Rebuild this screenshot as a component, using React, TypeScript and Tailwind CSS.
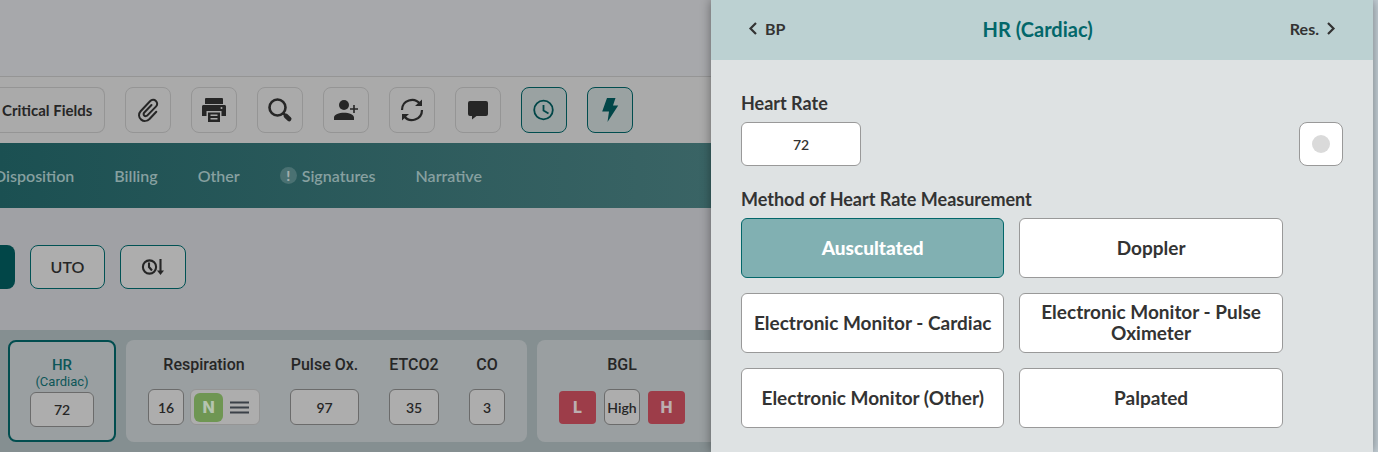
import type { ReactNode } from 'react'

interface Tool {
  name: string
  active?: boolean
  icon: ReactNode
}

const tools: Tool[] = [
  {
    name: 'Attachments',
    icon: (
      <svg viewBox="0 0 26 26" className="size-[26px]" fill="none" stroke="currentColor" strokeWidth="2" strokeLinecap="round">
        <path d="M21.300 14.800l-6.800 7.200c-2.200 2.200-5.800 2.600-8.300.6-2.700-2.200-2.900-6-.6-8.400L15 4.200c1.700-1.700 4.300-1.800 5.900-.3 1.700 1.600 1.700 4 0 5.700l-8.500 8.800c-.9.900-2.300 1-3.200.1-.8-.8-.8-2.100.1-3l7.200-7.500" />
      </svg>
    ),
  },
  {
    name: 'Print',
    icon: (
      <svg viewBox="0 0 26 26" className="size-[26px]" fill="currentColor">
        <path d="M4 2a1 1 0 0 1 1-1h16a1 1 0 0 1 1 1v5H4z" />
        <path d="M1 9.500C1 8.600 1.600 8 2.500 8h21c.9 0 1.500.6 1.500 1.500V19h-4.500v-5h-15v5H1z" />
        <path fillRule="evenodd" d="M7 15.500h12V25H7zM9.500 17.500v1.500h7v-1.500zM9.500 21v1.500h7V21z" />
        <circle cx="20.500" cy="11" r="1" className="fill-[#aaaaaa]" />
      </svg>
    ),
  },
  {
    name: 'Search',
    icon: (
      <svg viewBox="0 0 26 26" className="size-[26px]" fill="none" stroke="currentColor">
        <circle cx="10.500" cy="10.500" r="8" strokeWidth="2.600" />
        <path d="M16 16l2.500 2.500" strokeWidth="2.500" />
        <path d="M19 19l3.200 3" strokeWidth="4.600" strokeLinecap="round" />
      </svg>
    ),
  },
  {
    name: 'Add person',
    icon: (
      <svg viewBox="0 0 26 26" className="size-[26px]" fill="currentColor">
        <circle cx="11" cy="8" r="5" />
        <path d="M1 23v-2.500C1 17.500 6 15.800 11 15.800s10 1.700 10 4.700V23zM20.200 8h1.600v3.200H25v1.600h-3.200V16h-1.600v-3.200H17v-1.600h3.200z" />
      </svg>
    ),
  },
  {
    name: 'Sync',
    icon: (
      <svg viewBox="0 0 26 26" className="size-[26px]" fill="none" stroke="currentColor" strokeWidth="2.200">
        <path d="M3 13A10 10 0 0 1 21 7M23 13A10 10 0 0 1 5 19" />
        <path d="M23 2.500v6.500h-7zM3 23.500V17h7z" fill="currentColor" stroke="none" />
      </svg>
    ),
  },
  {
    name: 'Comments',
    icon: (
      <svg viewBox="0 0 26 26" className="size-[26px]" fill="currentColor">
        <path d="M5 4h16a2 2 0 0 1 2 2v11a2 2 0 0 1-2 2H11.500L7 22.500V19H5a2 2 0 0 1-2-2V6a2 2 0 0 1 2-2z" />
      </svg>
    ),
  },
  {
    name: 'Times',
    active: true,
    icon: (
      <svg viewBox="0 0 26 26" className="size-[26px]" fill="none" stroke="currentColor" strokeWidth="1.800">
        <circle cx="12.500" cy="13" r="9.300" />
        <path d="M12.500 8v5.500l5 3" />
      </svg>
    ),
  },
  {
    name: 'Quick actions',
    active: true,
    icon: (
      <svg viewBox="0 0 26 26" className="size-[26px]" fill="currentColor">
        <path d="M10 1h8.500L16 8.500h5.200L10.500 25 12 14.500H5.200z" />
      </svg>
    ),
  },
]

const methods = [
  'Auscultated',
  'Doppler',
  'Electronic Monitor - Cardiac',
  'Electronic Monitor - Pulse Oximeter',
  'Electronic Monitor (Other)',
  'Palpated',
]

function Vital({ label, value, width }: { label: string; value: string; width: string }) {
  return (
    <label className="flex flex-col items-center gap-3">
      <span className="font-[Roboto,sans-serif] text-base font-medium leading-6">{label}</span>
      <input defaultValue={value} className={`${width} h-9 rounded-md border border-[#6b6b6b] bg-[#adadad] text-center text-sm font-semibold`} />
    </label>
  )
}

function RunReport() {
  return (
    <main className="flex min-w-0 flex-col overflow-hidden whitespace-nowrap bg-[#a0a1a5] text-[#262626]">
      <div className="h-[76px] shrink-0 bg-[#a7a8ab]" />
      <div className="flex gap-5 border-t border-[#959595] bg-[#aaaaaa] py-2.5">
        <button className="h-[46px] w-[105px] shrink-0 rounded-r-lg border border-l-0 border-[#959595] pl-0.5 text-left text-[15px] font-bold">
          Critical Fields
        </button>
        {tools.map((tool) => (
          <button
            key={tool.name}
            aria-label={tool.name}
            className={`flex size-[46px] shrink-0 items-center justify-center rounded-lg border ${
              tool.active ? 'border-[#014d4f] bg-[#9aa2a2] text-[#014648]' : 'border-[#959595]'
            }`}
          >
            {tool.icon}
          </button>
        ))}
      </div>

      <nav className="flex h-[65px] shrink-0 items-center gap-10 bg-linear-to-r from-[#1b5052] to-[#3a6465] text-base font-semibold text-[#87a0a0]">
        <a href="#disposition" className="-ml-1.5">Disposition</a>
        <a href="#billing">Billing</a>
        <a href="#other">Other</a>
        <a href="#signatures" className="flex items-center gap-[5px]">
          <span className="flex size-[17px] items-center justify-center rounded-full bg-[#4a7172] text-sm font-black leading-none text-[#a3adad]">!</span>
          Signatures
        </a>
        <a href="#narrative">Narrative</a>
      </nav>

      <div className="flex gap-[15px] pb-[41px] pt-[37px]">
        <button aria-label="Add vitals" className="h-11 w-[15px] rounded-r-lg bg-[#014648]" />
        <button className="h-11 w-[75px] rounded-lg border border-[#015254] bg-[#adadad] text-base font-semibold">UTO</button>
        <button aria-label="Sort by time" className="flex h-11 w-[66px] items-center justify-center rounded-lg border border-[#015254] bg-[#adadad]">
          <svg viewBox="0 0 24 18" className="h-[18px] w-6" fill="none" stroke="currentColor" strokeWidth="2.100">
            <circle cx="8.500" cy="9" r="6.600" />
            <path d="M8 4.500V9l3 3.500M19.500 1v13" />
            <path d="M16 12.500h7L19.500 17z" fill="currentColor" stroke="none" />
          </svg>
        </button>
      </div>

      <div className="flex grow gap-2.5 bg-[#858f91] py-2.5 pl-2">
        <label className="flex h-[102px] w-[108px] shrink-0 flex-col items-center rounded-lg border-2 border-[#014d4f] bg-[#9a9fa1] pt-3.5 font-[Roboto,sans-serif] text-[#0d5658]">
          <span className="text-[15px] font-medium leading-[18px]">HR</span>
          <span className="text-[13px] leading-4">(Cardiac)</span>
          <input
            defaultValue="72"
            className="mt-0.5 h-[35px] w-16 rounded-md border border-[#6b6b6b] bg-[#adadad] text-center font-[Lato,sans-serif] text-sm font-semibold text-[#262626]"
          />
        </label>

        <div className="flex h-[102px] shrink-0 gap-[30px] rounded-lg bg-[#9a9fa1] px-[22px] pt-[13px]">
          <div className="flex flex-col items-center gap-3">
            <label htmlFor="respiration" className="font-[Roboto,sans-serif] text-base font-medium leading-6">Respiration</label>
            <div className="flex gap-1.5">
              <input id="respiration" defaultValue="16" className="h-9 w-9 rounded-md border border-[#6b6b6b] bg-[#adadad] text-center text-sm font-semibold" />
              <div className="flex h-9 w-[70px] items-center gap-[7px] rounded-md border border-[#959595] bg-[#adadad] pl-[3px]">
                <button className="size-[29px] rounded-md bg-[#6f9653] font-[Inter,sans-serif] text-base font-extrabold text-[#b5c4b0]">N</button>
                <button aria-label="Respiration options" className="text-[#3b4148]">
                  <svg viewBox="0 0 19 13" className="h-[13px] w-[19px]" stroke="currentColor" strokeWidth="2">
                    <path d="M0 1.500h19M0 6.500h19M0 11.500h19" />
                  </svg>
                </button>
              </div>
            </div>
          </div>
          <Vital label="Pulse Ox." value="97" width="w-[69px]" />
          <Vital label="ETCO2" value="35" width="w-[50px]" />
          <Vital label="CO" value="3" width="w-9" />
        </div>

        <div className="flex h-[102px] w-[200px] shrink-0 flex-col gap-3 rounded-lg bg-[#9a9fa1] pl-[22px] pt-[13px]">
          <label htmlFor="bgl" className="w-[126px] text-center font-[Roboto,sans-serif] text-base font-medium leading-6">BGL</label>
          <div className="flex items-center gap-2">
            <button className="h-[33px] w-[37px] rounded bg-[#9d3d49] font-[Inter,sans-serif] text-base font-extrabold text-[#bcaeb0]">L</button>
            <input id="bgl" defaultValue="High" className="h-9 w-9 rounded-md border border-[#6b6b6b] bg-[#adadad] text-center text-sm font-semibold" />
            <button className="h-[33px] w-[37px] rounded bg-[#9d3d49] font-[Inter,sans-serif] text-base font-extrabold text-[#bcaeb0]">H</button>
          </div>
        </div>
      </div>
    </main>
  )
}

function HeartRateDrawer() {
  return (
    <aside className="z-10 flex flex-col bg-[#dee2e3] text-[#333333] shadow-[0_0_10px_rgba(0,0,0,0.4)]">
      <header className="flex h-[60px] items-center justify-between bg-[#bcd1d2] px-9 pb-[3px]">
        <button className="flex items-center gap-1.5 text-base font-bold">
          <svg viewBox="0 0 12 14" className="h-3.5 w-3" fill="none" stroke="currentColor" strokeWidth="2.200">
            <path d="M9 1L3.500 6.500 9 12" />
          </svg>
          BP
        </button>
        <h1 className="text-xl font-bold text-[#03676a]">HR (Cardiac)</h1>
        <button className="flex items-center gap-1.5 text-base font-bold">
          Res.
          <svg viewBox="0 0 12 14" className="h-3.5 w-3" fill="none" stroke="currentColor" strokeWidth="2.200">
            <path d="M3 1L8.500 6.500 3 12" />
          </svg>
        </button>
      </header>

      <div className="px-[30px] pt-[30px]">
        <label htmlFor="heart-rate" className="block text-lg font-bold leading-[26px]">Heart Rate</label>
        <div className="mt-1.5 flex justify-between">
          <input id="heart-rate" defaultValue="72" className="h-11 w-[120px] rounded-md border border-[#999999] bg-white text-center text-sm font-semibold" />
          <button aria-label="Clear heart rate" className="flex size-11 items-center justify-center rounded-lg border border-[#999999] bg-white">
            <span className="size-[18px] rounded-full bg-[#dadada]" />
          </button>
        </div>

        <h2 className="mt-5 text-lg font-bold leading-[26px]">Method of Heart Rate Measurement</h2>
        <div className="mt-1.5 grid w-9/10 grid-cols-2 gap-[15px]">
          {methods.map((method) => (
            <button
              key={method}
              aria-pressed={method === 'Auscultated'}
              className={`h-[60px] rounded-md border px-2.5 pb-0.5 text-[19px] leading-[21px] ${
                method === 'Auscultated'
                  ? 'border-[#03676a] bg-[#81b0b2] font-black text-white'
                  : 'border-[#999999] bg-white font-bold'
              }`}
            >
              {method}
            </button>
          ))}
        </div>
      </div>
    </aside>
  )
}

export default function App() {
  return (
    <div className="grid min-h-screen grid-cols-[minmax(0,1fr)_662px_5px] font-[Lato,sans-serif]">
      <RunReport />
      <HeartRateDrawer />
      <div className="bg-[#c3ced5]" />
    </div>
  )
}
